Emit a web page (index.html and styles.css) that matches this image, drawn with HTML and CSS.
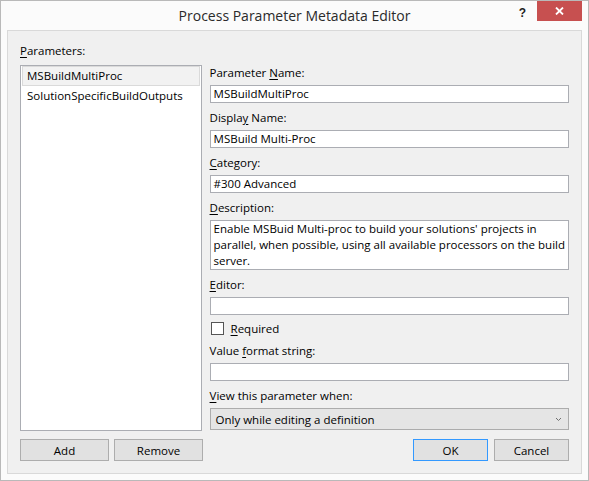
FILE: index.html
```html
<!DOCTYPE html>
<html>
<head>
<meta charset="utf-8">
<link rel="stylesheet" href="styles.css">
</head>
<body>
<div class="window">
  <div class="titlebar">
    <div class="title">Process Parameter Metadata Editor</div>
    <div class="controls">
      <div class="help">?</div>
      <div class="close">
        <svg width="9" height="8" viewBox="0 0 9 8"><path d="M1 0.5 L8 7.5 M8 0.5 L1 7.5" stroke="#fff" stroke-width="1.8" fill="none"/></svg>
      </div>
    </div>
  </div>
  <div class="client">
    <div class="main">
      <div class="leftcol">
        <div class="label"><u>P</u>arameters:</div>
        <div class="listbox">
          <div class="item selected">MSBuildMultiProc</div>
          <div class="item">SolutionSpecificBuildOutputs</div>
        </div>
      </div>
      <div class="rightcol">
        <div class="label">Parameter <u>N</u>ame:</div>
        <div class="textbox">MSBuildMultiProc</div>
        <div class="label">Displa<u>y</u> Name:</div>
        <div class="textbox">MSBuild Multi-Proc</div>
        <div class="label"><u>C</u>ategory:</div>
        <div class="textbox">#300 Advanced</div>
        <div class="label"><u>D</u>escription:</div>
        <div class="textarea">Enable MSBuid Multi-proc to build your solutions' projects in<br>parallel, when possible, using all available processors on the build<br>server.</div>
        <div class="label"><u>E</u>ditor:</div>
        <div class="textbox"></div>
        <div class="checkrow"><span class="checkbox"></span><span><u>R</u>equired</span></div>
        <div class="label">Value <u>f</u>ormat string:</div>
        <div class="textbox"></div>
        <div class="label"><u>V</u>iew this parameter when:</div>
        <div class="combo">
          <span>Only while editing a definition</span>
          <svg width="7" height="5" viewBox="0 0 7 5"><path d="M1 1 L3.5 3.5 L6 1" stroke="#707070" stroke-width="1" fill="none"/></svg>
        </div>
      </div>
    </div>
    <div class="buttons">
      <div class="btngroup left">
        <div class="btn">Add</div>
        <div class="btn">Remove</div>
      </div>
      <div class="btngroup right">
        <div class="btn default">OK</div>
        <div class="btn">Cancel</div>
      </div>
    </div>
  </div>
</div>
</body>
</html>
```

FILE: styles.css
```css
* { box-sizing: border-box; }
html, body { margin: 0; padding: 0; }
body {
  width: 589px;
  height: 481px;
  overflow: hidden;
  background: #ffffff;
  font-family: "Open Sans", "Noto Sans", sans-serif;
  font-size: 11.5px;
  color: #000;
}
u { text-decoration: underline; text-underline-offset: 2px; }

.window {
  width: 589px;
  height: 481px;
  border: 1px solid #b9b9b9;
  background: #fbfbfb;
  display: flex;
  flex-direction: column;
}

.titlebar {
  height: 29px;
  flex: none;
  display: grid;
  grid-template-columns: 1fr auto 1fr;
  align-items: start;
}
.title {
  grid-column: 2;
  font-size: 14px;
  line-height: 20px;
  padding-top: 5px;
  color: #2a2a2a;
  white-space: nowrap;
}
.controls {
  grid-column: 3;
  justify-self: end;
  display: flex;
  align-items: flex-start;
  margin-right: 6px;
}
.help {
  font-family: "Liberation Sans", sans-serif;
  font-weight: bold;
  font-size: 12px;
  line-height: 12px;
  margin-top: 6px;
  margin-right: 11px;
  color: #222;
}
.close {
  width: 45px;
  height: 20px;
  background: #c75050;
  display: flex;
  align-items: center;
  justify-content: center;
}

.client {
  flex: 1;
  margin: 0 6px 6px 6px;
  border: 1px solid #d9d9d9;
  background: #f0f0f0;
  padding: 12px;
  display: flex;
  flex-direction: column;
  gap: 8px;
}

.main {
  flex: 1;
  display: flex;
  gap: 8px;
  min-height: 0;
}
.leftcol {
  width: 183px;
  display: flex;
  flex-direction: column;
}
.leftcol .label { margin-bottom: 6px; }
.rightcol {
  flex: 1;
  margin-top: 22px;
  display: flex;
  flex-direction: column;
}

.label {
  line-height: 16px;
  height: 16px;
  margin-bottom: 4px;
  white-space: nowrap;
}

.listbox {
  flex: 1;
  background: #fff;
  border: 1px solid #abadb3;
  padding: 0 1px;
}
.item {
  height: 20px;
  line-height: 18px;
  padding: 0 4px;
  border: 1px solid transparent;
  white-space: nowrap;
}
.item.selected {
  background: #f2f2f2;
  border-color: #dadada;
}

.textbox {
  height: 18px;
  background: #fff;
  border: 1px solid #abadb3;
  padding: 0 3px;
  line-height: 16px;
  margin-bottom: 7px;
  white-space: nowrap;
}
.textarea {
  height: 50px;
  background: #fff;
  border: 1px solid #abadb3;
  padding: 0 3px;
  line-height: 16px;
  margin-bottom: 7px;
  white-space: nowrap;
}

.checkrow {
  height: 13px;
  display: flex;
  align-items: center;
  gap: 7px;
  margin-bottom: 8px;
  line-height: 13px;
  padding-left: 1px;
}
.checkbox {
  width: 13px;
  height: 13px;
  background: #fff;
  border: 1px solid #555;
  flex: none;
}

.combo {
  height: 22px;
  background: #e5e5e5;
  border: 1px solid #acacac;
  display: flex;
  align-items: center;
  justify-content: space-between;
  padding: 0 6px 0 5px;
}

.buttons {
  height: 22px;
  flex: none;
  display: flex;
  justify-content: space-between;
}
.btngroup { display: flex; gap: 5px; }
.btngroup.left { width: 183px; }
.btngroup.left .btn { width: 89px; }
.btngroup.right { gap: 6px; }
.btngroup.right .btn { width: 75px; }
.btn {
  height: 22px;
  background: #e1e1e1;
  border: 1px solid #adadad;
  display: flex;
  align-items: center;
  justify-content: center;
}
.btn.default { border-color: #3399ff; }
```
